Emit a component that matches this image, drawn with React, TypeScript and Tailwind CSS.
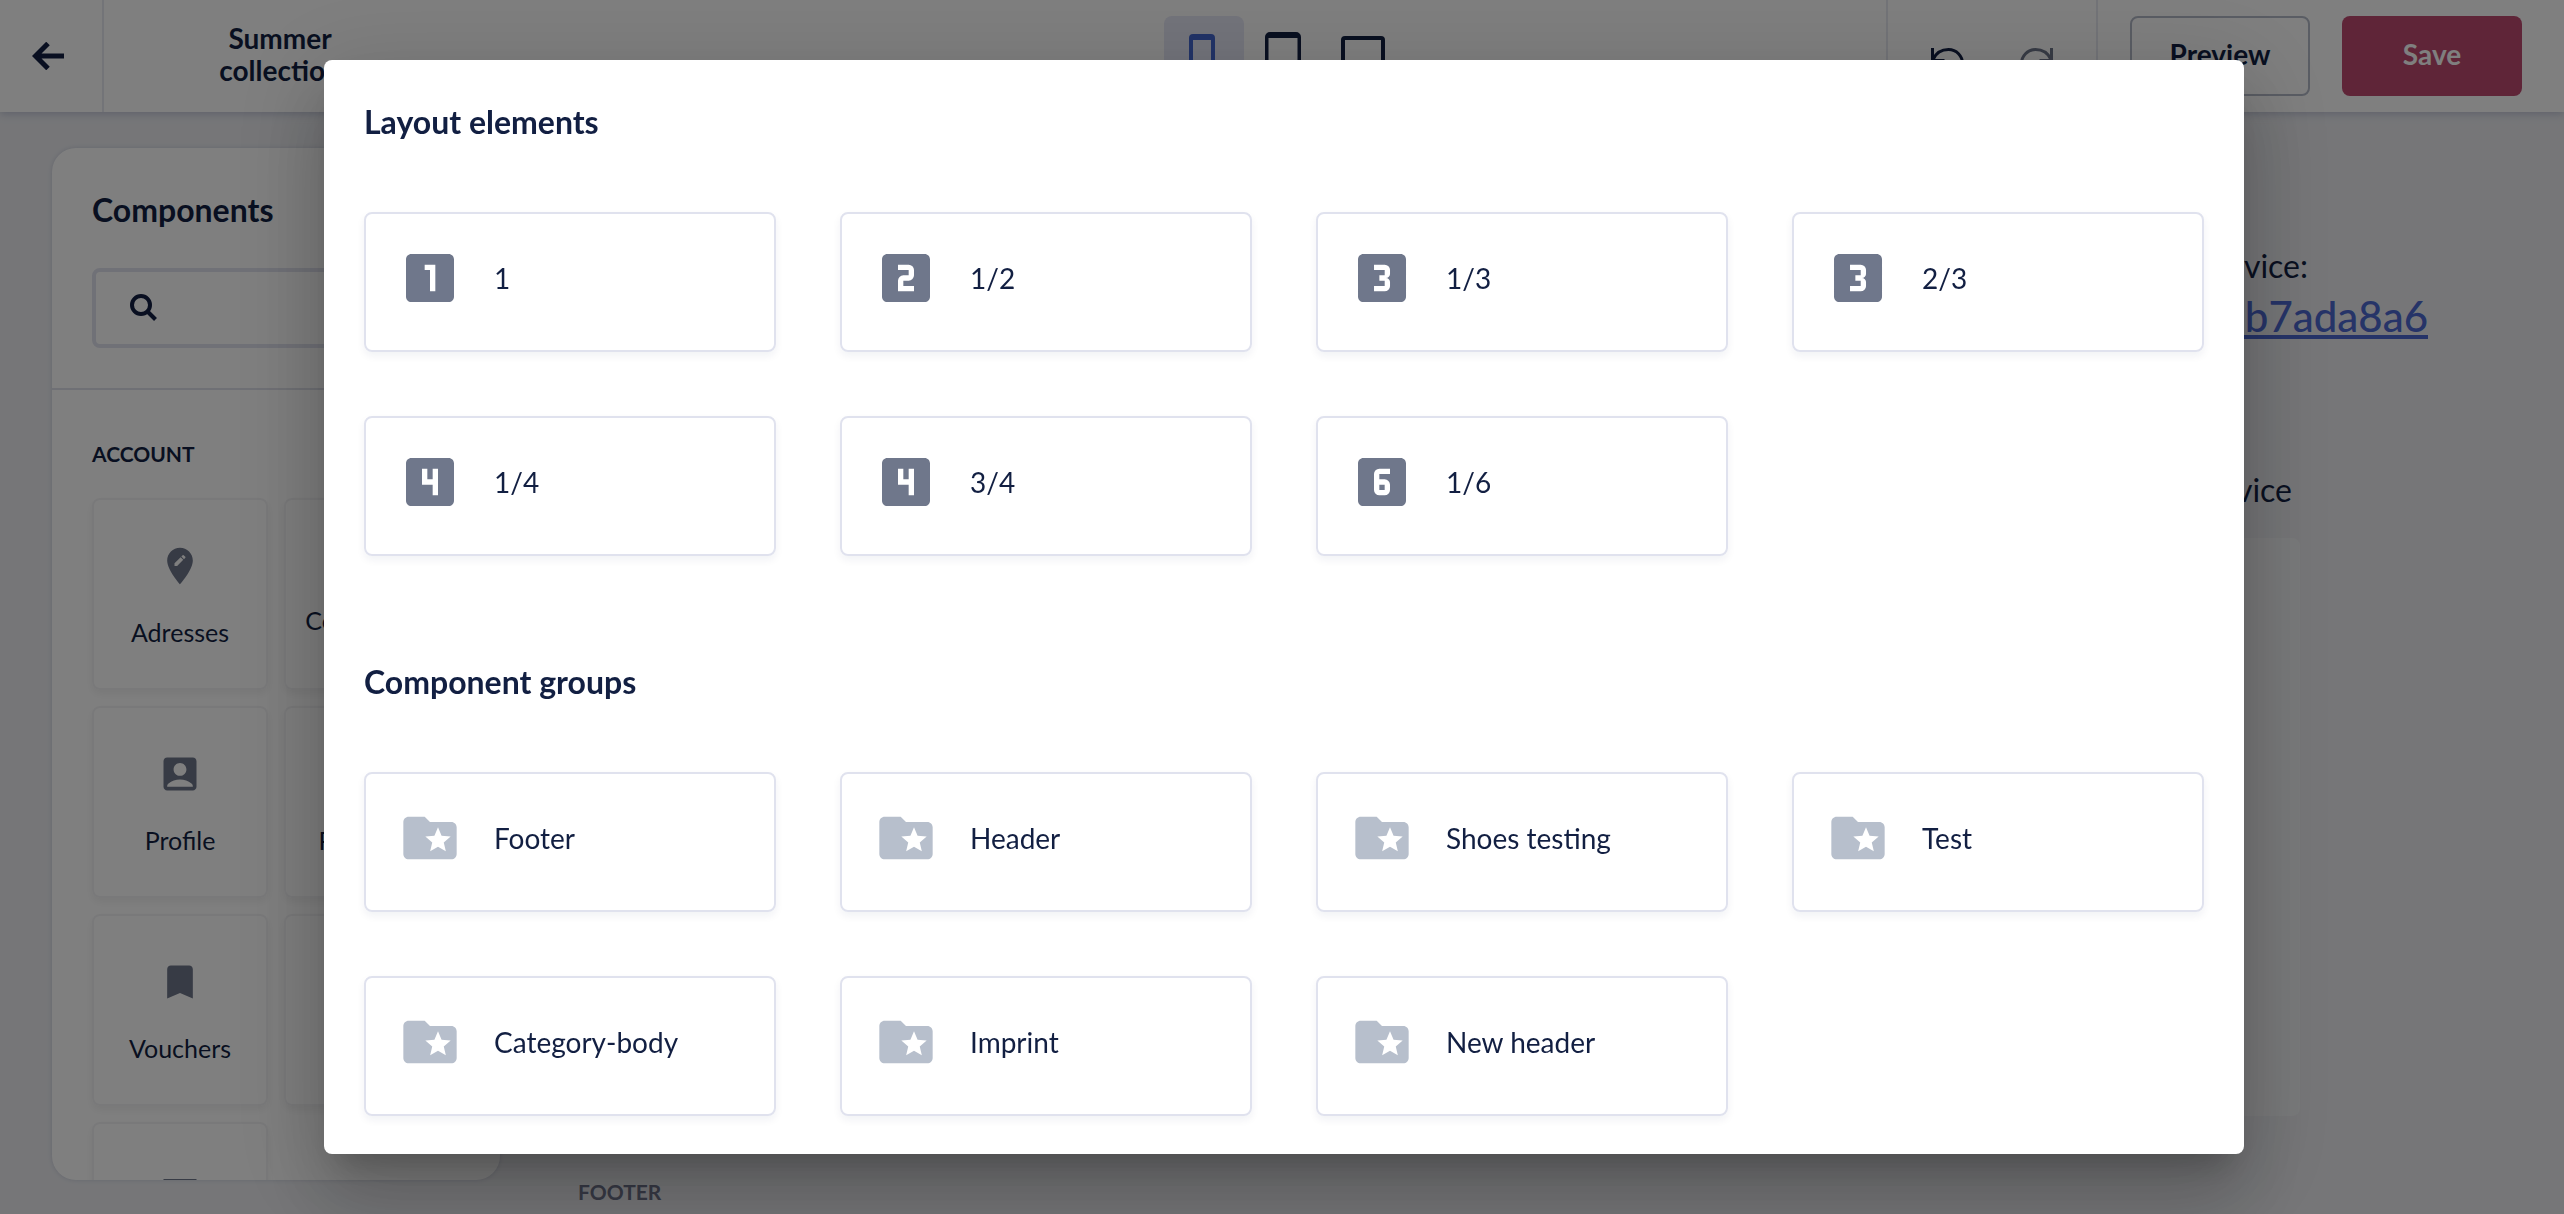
import type { IconType } from 'react-icons'
import {
  MdAccountBox,
  MdBookmark,
  MdEditLocation,
  MdFolderSpecial,
  MdLooks3,
  MdLooks4,
  MdLooks6,
  MdLooksOne,
  MdLooksTwo,
  MdMenu,
  MdMessage,
  MdPayment,
  MdPerson,
} from 'react-icons/md'

interface Item {
  label: string
  icon: IconType
}

const layoutElements: Item[] = [
  { label: '1', icon: MdLooksOne },
  { label: '1/2', icon: MdLooksTwo },
  { label: '1/3', icon: MdLooks3 },
  { label: '2/3', icon: MdLooks3 },
  { label: '1/4', icon: MdLooks4 },
  { label: '3/4', icon: MdLooks4 },
  { label: '1/6', icon: MdLooks6 },
]

const componentGroups: Item[] = [
  'Footer',
  'Header',
  'Shoes testing',
  'Test',
  'Category-body',
  'Imprint',
  'New header',
].map(label => ({ label, icon: MdFolderSpecial }))

const accountComponents: Item[] = [
  { label: 'Adresses', icon: MdEditLocation },
  { label: 'Commission history', icon: MdMessage },
  { label: 'Profile', icon: MdAccountBox },
  { label: 'Payments', icon: MdPayment },
  { label: 'Vouchers', icon: MdBookmark },
  { label: 'Login', icon: MdPerson },
  { label: 'Orders', icon: MdMenu },
]

function DeviceButton({ label, path, active }: { label: string; path: string; active?: boolean }) {
  return (
    <button
      aria-label={label}
      className={
        active
          ? 'flex size-20 items-center justify-center rounded-lg bg-[#e6e8f6] text-[#4467cf]'
          : 'flex size-20 items-center justify-center rounded-lg'
      }
    >
      <svg viewBox="0 0 48 48" fill="currentColor" fillRule="evenodd" className="size-12">
        <path d={path} />
      </svg>
    </button>
  )
}

function TopBar() {
  return (
    <header className="relative grid h-28 grid-cols-[1fr_auto_1fr] bg-white pl-1 shadow-[0_2px_8px_rgba(120,130,170,0.4)]">
      <div className="flex">
        <button aria-label="Back" className="flex w-25 items-center border-r-2 border-[#e6e8f0] pl-7">
          <svg viewBox="0 0 32 28" fill="none" stroke="currentColor" strokeWidth="5" className="h-7 w-8">
            <path d="M32 14H4M16 1.5 3.5 14 16 26.5" />
          </svg>
        </button>
        <div className="flex w-88 items-center justify-center pb-1">
          <h1 className="w-40 text-center text-[28px] leading-8 font-bold">Summer collection</h1>
        </div>
      </div>

      {/* Device switcher */}
      <div className="flex items-center">
        <DeviceButton
          label="Mobile"
          active
          path="M13 2h18a4 4 0 0 1 4 4v36a4 4 0 0 1-4 4H13a4 4 0 0 1-4-4V6a4 4 0 0 1 4-4zM13 8v30h18V8z"
        />
        <DeviceButton
          label="Tablet"
          path="M10 0h26a5 5 0 0 1 5 5v38a5 5 0 0 1-5 5H10a5 5 0 0 1-5-5V5a5 5 0 0 1 5-5zM8.500 6v34h29V6z"
        />
        <DeviceButton
          label="Desktop"
          path="M5 4h36a4 4 0 0 1 4 4v26a4 4 0 0 1-4 4H5a4 4 0 0 1-4-4V8a4 4 0 0 1 4-4zM5 8v26h36V8z"
        />
      </div>

      <div className="flex justify-end">
        {/* History */}
        <div className="flex w-[212px] items-center justify-center gap-14 border-x-2 border-[#e6e8f0]">
          <button aria-label="Undo">
            <svg viewBox="0 0 34 34" fill="none" stroke="currentColor" strokeWidth="3" className="size-[34px]">
              <path d="M2.500 9v12.500h12M3 20.500C6 14 12 10.500 18.500 10.500c8 0 14 6.500 14 14" />
            </svg>
          </button>
          <button aria-label="Redo" disabled className="text-[#6f778b]">
            <svg viewBox="0 0 34 34" fill="none" stroke="currentColor" strokeWidth="3" className="size-[34px]">
              <path d="M31.500 9v12.500h-12M31 20.500C28 14 22 10.500 15.500 10.500c-8 0-14 6.500-14 14" />
            </svg>
          </button>
        </div>

        <div className="flex items-center gap-8 pr-[42px] pl-8 text-[28px] font-bold">
          <button className="h-20 w-45 rounded-lg border-2 border-[#b4bac8] pb-1">Preview</button>
          <button className="h-20 w-45 rounded-lg bg-[#be4a70] pb-1 text-white">Save</button>
        </div>
      </div>
    </header>
  )
}

function Sidebar() {
  return (
    <aside className="mb-[34px] w-112 shrink-0 overflow-hidden rounded-3xl bg-white shadow-[0_0_4px_rgba(120,130,170,0.3)]">
      <div className="border-b-2 border-[#dfe1ea] px-10 pt-10 pb-10">
        <h2 className="text-[32px] leading-11 font-bold">Components</h2>
        <label className="mt-9 flex h-20 items-center gap-4 rounded-lg border-4 border-[#e0e2ee] px-[34px]">
          <svg viewBox="0 0 28 28" fill="none" stroke="currentColor" strokeWidth="4" className="size-7 shrink-0">
            <circle cx="11" cy="11" r="9" />
            <path d="m17.500 17.500 8 8" />
          </svg>
          <input aria-label="Search components" className="min-w-0 flex-1 text-2xl outline-none" />
        </label>
      </div>
      <div className="px-10 pt-13">
        <h3 className="text-[21px] leading-6 font-bold">ACCOUNT</h3>
        <div className="mt-8 grid grid-cols-2 gap-4">
          {accountComponents.map(({ label, icon: Icon }) => (
            <button
              key={label}
              className="flex h-48 flex-col items-center justify-center gap-8 rounded-lg border-2 border-[#f3f3f5] px-4 text-[25px] leading-6 shadow-[0_4px_8px_rgba(0,0,0,0.06)]"
            >
              <Icon className="size-11 shrink-0 text-[#6f778b]" />
              {label}
            </button>
          ))}
        </div>
      </div>
    </aside>
  )
}

function Canvas() {
  return (
    <main className="flex flex-1 flex-col justify-between pb-2 pl-[78px]">
      <div className="flex flex-col items-end pt-[94px]">
        <p className="pr-64 text-[32px] leading-12">On your device:</p>
        <a href="#preview" className="pr-34 text-[42px] leading-13 font-medium text-[#4c68d0] underline">
          Preview b7ada8a6
        </a>
        <p className="pt-31 pr-68 text-[32px] leading-12">Scan with your device</p>
        <div className="mt-6 mr-66 h-[578px] w-[750px] rounded-lg bg-[#f3f4f6]" />
      </div>
      <h3 className="text-[21px] leading-7 font-bold text-[#6f738b]">FOOTER</h3>
    </main>
  )
}

function Section({ title, items, iconClass }: { title: string; items: Item[]; iconClass: string }) {
  return (
    <section>
      <h2 className="text-[32px] leading-11 font-bold">{title}</h2>
      <div className="mt-17 grid grid-cols-4 gap-16">
        {items.map(({ label, icon: Icon }) => (
          <button
            key={label}
            className="flex h-35 items-start gap-8 rounded-lg border-2 border-[#e0e2ee] p-8 text-left text-[28px] leading-16 shadow-[0_4px_8px_rgba(20,30,80,0.06)]"
          >
            <Icon className={iconClass} />
            {label}
          </button>
        ))}
      </div>
    </section>
  )
}

export default function App() {
  return (
    <div className="flex h-screen flex-col overflow-hidden bg-[#ecedf1] font-[Lato,sans-serif] text-[#121f42]">
      <TopBar />
      <div className="flex min-h-0 flex-1 pt-9 pl-13">
        <Sidebar />
        <Canvas />
      </div>

      {/* Element picker */}
      <div className="fixed inset-0 flex justify-center bg-black/50 py-15 pl-1">
        <div
          role="dialog"
          aria-modal="true"
          aria-label="Add element"
          className="flex w-full max-w-[1920px] flex-col gap-26 overflow-hidden rounded-lg bg-white p-10 shadow-[0_22px_30px_-14px_rgba(0,0,0,0.2),0_48px_76px_6px_rgba(0,0,0,0.14),0_18px_92px_16px_rgba(0,0,0,0.12)]"
        >
          <Section title="Layout elements" items={layoutElements} iconClass="size-16 shrink-0 text-[#6f778b]" />
          <Section title="Component groups" items={componentGroups} iconClass="size-16 shrink-0 text-[#b7bfcc]" />
        </div>
      </div>
    </div>
  )
}
